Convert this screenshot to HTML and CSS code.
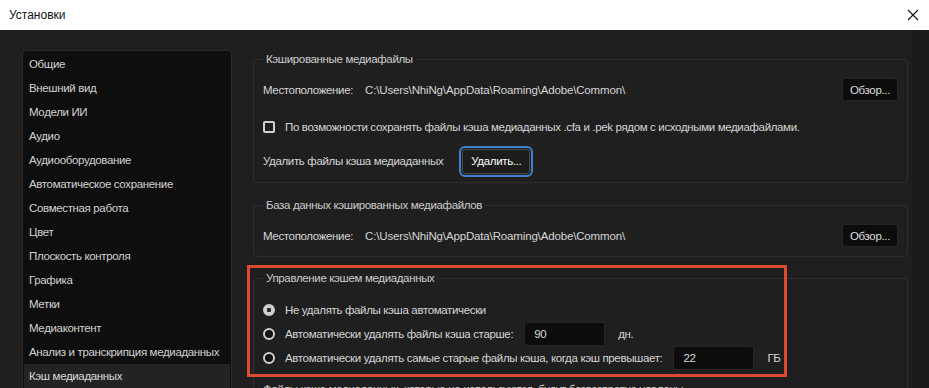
FILE: index.html
```html
<!DOCTYPE html>
<html lang="ru">
<head>
    <meta charset="UTF-8">
    <title>Установки</title>
    <link rel="stylesheet" href="styles.css">
</head>
<body>
    <div class="titlebar">
        <span class="title">Установки</span>
        <svg class="close" width="12" height="12" viewBox="0 0 12 12">
            <path d="M1 1 L11 11 M11 1 L1 11" stroke="#111" stroke-width="1.1" fill="none"/>
        </svg>
    </div>
    <div class="window">
        <ul class="sidebar">
            <li>Общие</li>
            <li>Внешний вид</li>
            <li>Модели ИИ</li>
            <li>Аудио</li>
            <li>Аудиооборудование</li>
            <li>Автоматическое сохранение</li>
            <li>Совместная работа</li>
            <li>Цвет</li>
            <li>Плоскость контроля</li>
            <li>Графика</li>
            <li>Метки</li>
            <li>Медиаконтент</li>
            <li>Анализ и транскрипция медиаданных</li>
            <li class="selected">Кэш медиаданных</li>
        </ul>
        <div class="content">
            <fieldset class="group">
                <legend>Кэшированные медиафайлы</legend>
                <div class="row row-loc">
                    <span class="label">Местоположение:</span>
                    <span class="path">C:\Users\NhiNg\AppData\Roaming\Adobe\Common\</span>
                    <button class="btn browse">Обзор...</button>
                </div>
                <div class="row row-check">
                    <span class="checkbox"></span>
                    <span>По возможности сохранять файлы кэша медиаданных .cfa и .pek рядом с исходными медиафайлами.</span>
                </div>
                <div class="row row-delete">
                    <span class="label">Удалить файлы кэша медиаданных</span>
                    <button class="btn delete">Удалить...</button>
                </div>
            </fieldset>

            <fieldset class="group group-db">
                <legend>База данных кэшированных медиафайлов</legend>
                <div class="row row-loc">
                    <span class="label">Местоположение:</span>
                    <span class="path">C:\Users\NhiNg\AppData\Roaming\Adobe\Common\</span>
                    <button class="btn browse">Обзор...</button>
                </div>
            </fieldset>

            <fieldset class="group group-manage">
                <legend>Управление кэшем медиаданных</legend>
                <div class="row row-radio first">
                    <span class="radio checked"></span>
                    <span>Не удалять файлы кэша автоматически</span>
                </div>
                <div class="row row-radio">
                    <span class="radio"></span>
                    <span>Автоматически удалять файлы кэша старше:</span>
                    <span class="field">90</span>
                    <span class="unit">дн.</span>
                </div>
                <div class="row row-radio">
                    <span class="radio"></span>
                    <span>Автоматически удалять самые старые файлы кэша, когда кэш превышает:</span>
                    <span class="field">22</span>
                    <span class="unit">ГБ</span>
                </div>
                <div class="row row-note">
                    <span>Файлы кэша медиаданных, которые не используются, будут безвозвратно удалены.</span>
                </div>
            </fieldset>

            <div class="highlight"></div>
        </div>
        <div class="scrolltrack"></div>
    </div>
</body>
</html>
```

FILE: styles.css
```css
body {
    margin: 0;
    width: 929px;
    height: 388px;
    overflow: hidden;
    font-family: "Liberation Sans", Arial, sans-serif;
    font-size: 11.5px;
    letter-spacing: -0.35px;
    color: #d6d6d6;
    background-color: #1f1f1f;
}
.titlebar {
    height: 30px;
    background-color: #fff;
    color: #111;
    display: flex;
    align-items: center;
    justify-content: space-between;
    padding: 0 10px 0 9px;
}
.titlebar .title {
    font-size: 12px;
    letter-spacing: 0;
}
.window {
    display: flex;
    height: 338px;
    padding: 20px 0 0 22px;
    overflow: hidden;
}
.sidebar {
    list-style: none;
    margin: 0;
    padding: 1px 0 0 0;
    width: 208px;
    height: 400px;
    flex-shrink: 0;
    background-color: #0e0e0e;
    border: 1px solid #2a2a2a;
    border-radius: 4px;
}
.sidebar li {
    height: 24px;
    line-height: 24px;
    padding-left: 5px;
    margin: 0 1px;
    white-space: nowrap;
    color: #d2d2d2;
}
.sidebar li.selected {
    background-color: #232323;
    color: #dcdcdc;
}
.content {
    position: relative;
    margin: 1px 0 0 21px;
    width: 655px;
    flex-shrink: 0;
}
.group {
    margin: 0;
    padding: 0 9px 6px 9px;
    border: 1px solid #2e2e2e;
    border-radius: 4px;
    min-width: 0;
}
.group legend {
    padding: 0 3px;
    line-height: 16px;
    color: #cdcdcd;
}
.row {
    display: flex;
    align-items: center;
    white-space: nowrap;
}
.row-loc {
    height: 23px;
    margin-top: 11px;
}
.row-loc .path {
    margin-left: 12px;
    letter-spacing: -0.15px;
}
.row-check {
    height: 20px;
    margin-top: 16px;
}
.row-delete {
    height: 30px;
    margin-top: 9px;
}
.row-delete .label {
    margin-right: 19px;
}
.btn {
    font-family: inherit;
    font-size: 11.5px;
    letter-spacing: -0.35px;
    color: #dedede;
    background-color: #0c0c0c;
    border: 1px solid #262626;
    border-radius: 3px;
    cursor: pointer;
}
.browse {
    margin-left: auto;
    height: 23px;
    width: 56px;
    padding: 0;
}
.delete {
    height: 25px;
    width: 68px;
    padding: 0;
    background-color: #1c1c1c;
    border: 1px solid #4a4a4a;
    outline: 2px solid #3f7fd0;
    outline-offset: 1px;
    color: #fff;
}
.checkbox {
    width: 8px;
    height: 8px;
    border: 2px solid #d0d0d0;
    border-radius: 2px;
    margin: 0 10px 0 0;
}
.group-db {
    margin-top: 14px;
    padding-bottom: 9px;
}
.group-manage {
    margin-top: 13px;
    padding-bottom: 20px;
}
.row-radio {
    height: 24px;
}
.row-radio.first {
    margin-top: 12px;
}
.radio {
    width: 8px;
    height: 8px;
    border: 2px solid #d0d0d0;
    border-radius: 50%;
    margin-right: 10px;
    background-color: #111;
}
.radio.checked {
    border-color: #cfcfcf;
    background: radial-gradient(circle, #2a2a2a 0 2px, #cfcfcf 2.5px);
}
.field {
    width: 70px;
    height: 22px;
    line-height: 22px;
    margin-left: 11px;
    padding-left: 9px;
    background-color: #0c0c0c;
    border: 1px solid #262626;
    border-radius: 3px;
    color: #dadada;
}
.unit {
    margin-left: 13px;
}
.row-note {
    height: 24px;
    margin-top: 7px;
}
.highlight {
    position: absolute;
    left: -6px;
    top: 214px;
    width: 534px;
    height: 106px;
    border: 3px solid #de4a2f;
    pointer-events: none;
}
.scrolltrack {
    margin: -20px 0 0 4px;
    width: 17px;
    height: 358px;
    background-color: #1b1b1b;
}
```
